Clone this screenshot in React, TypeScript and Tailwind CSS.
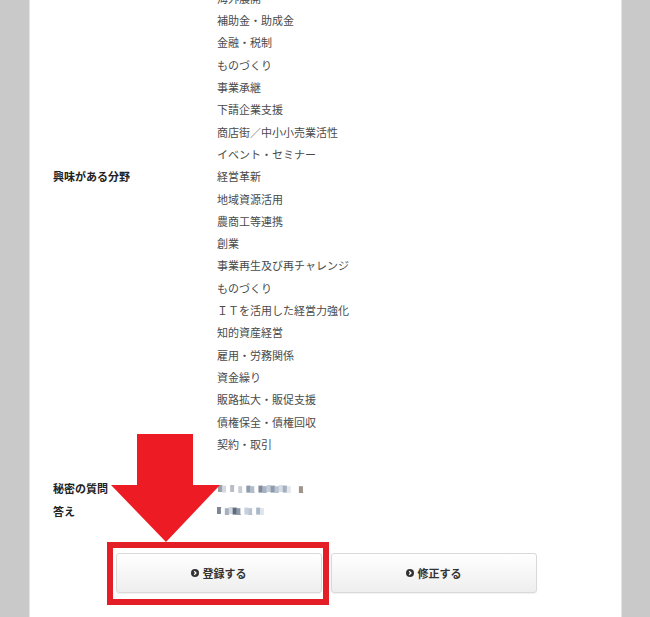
import React from "react";

const items = [
  "海外展開",
  "補助金・助成金",
  "金融・税制",
  "ものづくり",
  "事業承継",
  "下請企業支援",
  "商店街／中小小売業活性",
  "イベント・セミナー",
  "経営革新",
  "地域資源活用",
  "農商工等連携",
  "創業",
  "事業再生及び再チャレンジ",
  "ものづくり",
  "ＩＴを活用した経営力強化",
  "知的資産経営",
  "雇用・労務関係",
  "資金繰り",
  "販路拡大・販促支援",
  "債権保全・債権回収",
  "契約・取引",
];

const mosaic1 = [
  "#9aa1ab", "#d5d9df", "#ffffff", "#b7bec8", "#ffffff", "#c9ced6", "#ffffff", "#8f9bab",
  "#b3bdca", "#ffffff", "#7f8b9c", "#a7b3c2", "#c3ccd8", "#8e9aab", "#b9c4d2", "#d7dde5",
  "#a4afbd", "#e4e8ed", "#ffffff", "#ffffff", "#9e948a", "#ffffff",
];
const mosaic2 = [
  "#7d8794", "#ffffff", "#a5afbd", "#d1d7df", "#5f6b7c", "#8c99ab", "#ffffff", "#c6d0dc",
  "#b7c3d1", "#ffffff", "#a9b7c8", "#dfe5ec",
];

function Mosaic({ cells, width }: { cells: string[]; width: number }) {
  const w = width / cells.length;
  return (
    <svg width={width} height={8} viewBox={`0 0 ${width} 8`} className="block">
      {cells.map((c, i) => (
        <rect key={i} x={i * w} y={(i % 3) * 0.6} width={w + 0.3} height={7} fill={c} />
      ))}
    </svg>
  );
}

function CircleIcon() {
  return (
    <svg width="8" height="8" viewBox="0 0 8 8" className="block">
      <circle cx="4" cy="4" r="4" fill="#333" />
      <path d="M3.2 2.3 L5 4 L3.2 5.7" stroke="#fff" strokeWidth="1.2" fill="none" />
    </svg>
  );
}

function Btn({ label }: { label: string }) {
  return (
    <button className="w-[206px] h-[40px] rounded-[3px] border border-[#d9d9d9] bg-gradient-to-b from-white to-[#eeeeee] shadow-[0_1px_1px_rgba(0,0,0,0.06)] flex items-center justify-center gap-[4px] text-[11px] font-bold text-[#333]">
      <CircleIcon />
      <span>{label}</span>
    </button>
  );
}

export default function App() {
  return (
    <div className="h-[617px] overflow-hidden bg-[#c9c9c9] font-['Noto_Sans_CJK_JP','Noto_Sans',sans-serif]">
      <div className="relative ml-[29px] w-[593px] h-full bg-white border-x border-[#e4e4e4] flex flex-col">
        <div className="-mt-[13px] pl-[23px] grid grid-cols-[164px_1fr] auto-rows-[22.3px] text-[11px] text-[#4a4a4a]">
          <div className="col-start-1 row-start-9 flex items-center font-bold text-[#222]">興味がある分野</div>
          {items.map((t, i) => (
            <div key={i} className="col-start-2 flex items-center">
              {t}
            </div>
          ))}
          <div className="col-start-2" />
          <div className="col-start-1 flex items-center font-bold text-[#222]">秘密の質問</div>
          <div className="col-start-2 flex items-center pl-[1px]">
            <div className="blur-[0.5px]">
              <Mosaic cells={mosaic1} width={89} />
            </div>
          </div>
          <div className="col-start-1 flex items-center font-bold text-[#222]">答え</div>
          <div className="col-start-2 flex items-center">
            <div className="blur-[0.5px]">
              <Mosaic cells={mosaic2} width={47} />
            </div>
          </div>
        </div>

        <div className="mt-[31px] flex justify-center gap-[9px] pl-[1px]">
          <Btn label="登録する" />
          <Btn label="修正する" />
        </div>

        {/* annotation overlays */}
        <div className="absolute left-[77px] top-[542px] w-[222px] h-[63px] border-[6px] border-[#e41e26] pointer-events-none" />
        <svg
          className="absolute left-[81px] top-[434px] pointer-events-none"
          width="110"
          height="109"
          viewBox="0 0 110 109"
        >
          <polygon points="26,0 82,0 82,51 109,51 55,108 0,51 26,51" fill="#ed1c24" />
        </svg>
      </div>
    </div>
  );
}
